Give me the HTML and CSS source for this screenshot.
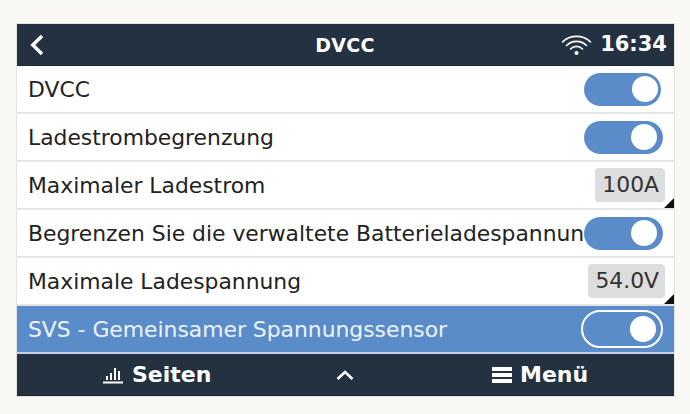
FILE: index.html
```html
<!DOCTYPE html>
<html lang="de">
<head>
  <meta charset="UTF-8" />
  <title>DVCC</title>
  <link rel="stylesheet" href="styles.css">
</head>
<body>
  <div class="screen">
    <header class="topbar">
      <svg class="back" width="16" height="24" viewBox="0 0 16 24"><path d="M14 3 L4.8 12 L14 21" fill="none" stroke="#fff" stroke-width="3.4"/></svg>
      <span class="title">DVCC</span>
      <div class="status">
        <svg class="wifi" width="31" height="22" viewBox="0 0 31 22" fill="none" stroke="#fff" stroke-width="1.6" stroke-linecap="round">
          <path d="M1.5 8 C9 0.5 22 0.5 29.5 8"/>
          <path d="M5.5 11.5 C11 6 20 6 25.5 11.5"/>
          <path d="M9.5 15 C13 11.5 18 11.5 21.5 15"/>
          <circle cx="15.5" cy="19" r="2" fill="#fff" stroke="none"/>
        </svg>
        <span class="clock">16:34</span>
      </div>
    </header>

    <div class="list">
      <div class="row">
        <span class="label">DVCC</span>
        <span class="switch short"><i class="knob"></i></span>
      </div>
      <div class="row">
        <span class="label">Ladestrombegrenzung</span>
        <span class="switch"><i class="knob"></i></span>
      </div>
      <div class="row">
        <span class="label">Maximaler Ladestrom</span>
        <span class="value">100A</span>
        <i class="corner"></i>
      </div>
      <div class="row">
        <span class="label">Begrenzen Sie die verwaltete Batterieladespannung</span>
        <span class="switch"><i class="knob"></i></span>
      </div>
      <div class="row">
        <span class="label">Maximale Ladespannung</span>
        <span class="value">54.0V</span>
        <i class="corner"></i>
      </div>
      <div class="row selected">
        <span class="label">SVS - Gemeinsamer Spannungssensor</span>
        <span class="switch outline"><i class="knob"></i></span>
      </div>
    </div>

    <footer class="bottombar">
      <div class="tab pages">
        <svg width="21" height="18" viewBox="0 0 21 18" fill="#fff">
          <rect x="0" y="15.5" width="20" height="2"/>
          <rect x="3" y="10" width="2" height="4"/>
          <rect x="7" y="7" width="2" height="7"/>
          <rect x="11" y="2" width="2" height="12"/>
          <rect x="15" y="5" width="2" height="9"/>
        </svg>
        <span>Seiten</span>
      </div>
      <svg class="chevron" width="18" height="10" viewBox="0 0 18 10"><path d="M1.5 9 L9 2 L16.5 9" fill="none" stroke="#fff" stroke-width="2.6"/></svg>
      <div class="tab menu">
        <svg width="20" height="18" viewBox="0 0 20 18" fill="#fff">
          <rect x="0" y="1" width="20" height="4"/>
          <rect x="0" y="7" width="20" height="4"/>
          <rect x="0" y="13" width="20" height="4"/>
        </svg>
        <span>Menü</span>
      </div>
    </footer>
  </div>
</body>
</html>
```

FILE: styles.css
```css
body {
  margin: 0;
  padding: 23px 15px 0 16px;
  background-color: #f9f8f4;
  font-family: "DejaVu Sans", sans-serif;
  color: #222;
}

.screen {
  width: 657px;
  border: 1px solid #e4e3df;
  background: white;
}

.topbar {
  display: flex;
  align-items: center;
  justify-content: space-between;
  position: relative;
  height: 41px;
  padding: 0 7px 0 11px;
  background-color: #243140;
  border-bottom: 1px solid #1b2632;
  color: white;
  font-weight: bold;
}

.title {
  position: absolute;
  left: 0;
  right: 1px;
  text-align: center;
  font-size: 19px;
  letter-spacing: 0.3px;
}

.status {
  display: flex;
  align-items: center;
  gap: 8px;
}

.clock {
  font-size: 21px;
  margin-top: -1px;
}

.row {
  display: flex;
  align-items: center;
  justify-content: space-between;
  position: relative;
  height: 46px;
  padding: 0 11px;
  border-bottom: 2px solid #e5e5e5;
  font-size: 21.85px;
}

.label {
  flex: 1;
  min-width: 0;
  margin-top: 1px;
  overflow: hidden;
  white-space: nowrap;
}

.switch {
  display: flex;
  align-items: center;
  justify-content: flex-end;
  box-sizing: border-box;
  width: 79px;
  height: 33px;
  padding-right: 6px;
  border-radius: 17px;
  background-color: #5a8cca;
}

.switch.short {
  width: 77px;
  margin-right: 2px;
  padding-right: 3px;
}

.knob {
  width: 26px;
  height: 26px;
  border-radius: 50%;
  background: white;
}

.switch.outline {
  width: 82px;
  height: 38px;
  padding-right: 5px;
  border-radius: 19px;
  border: 2px solid white;
}

.value {
  margin-right: -2px;
  padding: 0 6px 0 7px;
  height: 34px;
  line-height: 34px;
  border-radius: 4px;
  background-color: #dddddd;
  color: #333;
}

.corner {
  position: absolute;
  right: 0;
  bottom: 0;
  border-style: solid;
  border-width: 0 0 10px 10px;
  border-color: transparent transparent #111 transparent;
}

.selected {
  background-color: #5a8cca;
  color: #eef4fb;
  border-bottom-color: #c3d4e8;
}

.bottombar {
  display: flex;
  align-items: center;
  position: relative;
  height: 41px;
  background-color: #243140;
  border-bottom: 1px solid #1b2632;
  color: white;
  font-size: 22px;
  font-weight: bold;
}

.tab {
  display: flex;
  align-items: center;
  gap: 8px;
  position: absolute;
}

.pages {
  left: 86px;
}

.menu {
  left: 475px;
}

.chevron {
  position: absolute;
  left: 319px;
  top: 16px;
}
```
